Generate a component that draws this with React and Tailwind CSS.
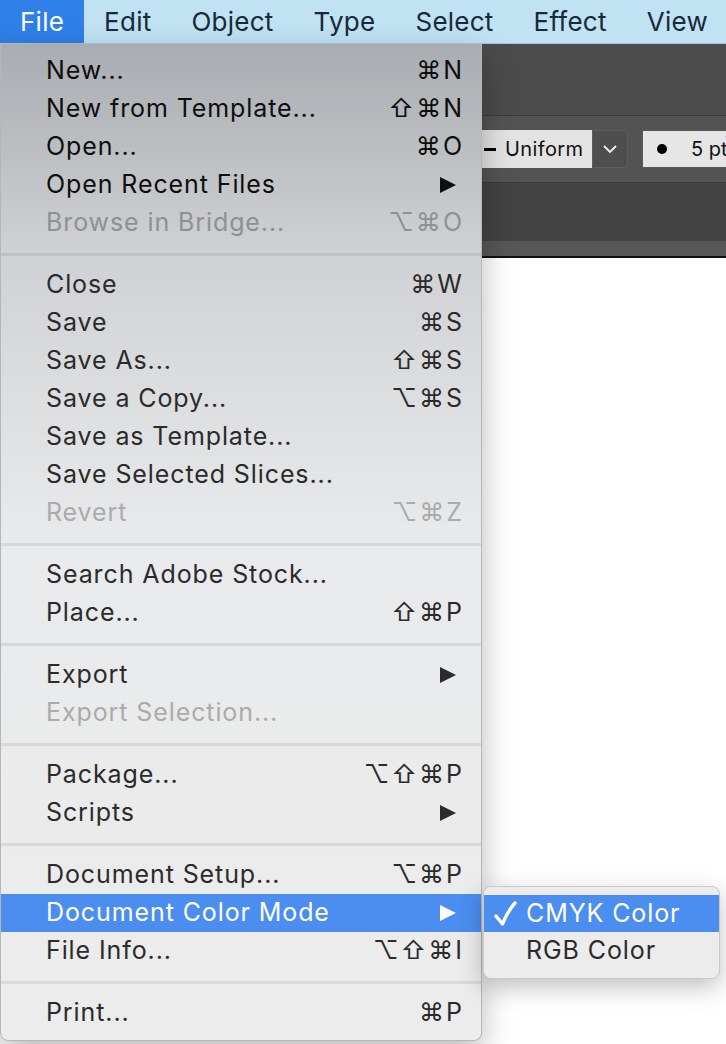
import React from 'react';

const FONT = { fontFamily: 'Inter, "DejaVu Sans", sans-serif' };

const sections = [
  [
    { label: 'New...', key: '⌘N' },
    { label: 'New from Template...', key: '⇧⌘N' },
    { label: 'Open...', key: '⌘O' },
    { label: 'Open Recent Files', sub: true },
    { label: 'Browse in Bridge...', key: '⌥⌘O', disabled: true }
  ],
  [
    { label: 'Close', key: '⌘W' },
    { label: 'Save', key: '⌘S' },
    { label: 'Save As...', key: '⇧⌘S' },
    { label: 'Save a Copy...', key: '⌥⌘S' },
    { label: 'Save as Template...' },
    { label: 'Save Selected Slices...' },
    { label: 'Revert', key: '⌥⌘Z', disabled: true }
  ],
  [
    { label: 'Search Adobe Stock...' },
    { label: 'Place...', key: '⇧⌘P' }
  ],
  [
    { label: 'Export', sub: true },
    { label: 'Export Selection...', disabled: true }
  ],
  [
    { label: 'Package...', key: '⌥⇧⌘P' },
    { label: 'Scripts', sub: true }
  ],
  [
    { label: 'Document Setup...', key: '⌥⌘P' },
    { label: 'Document Color Mode', sub: true, active: true },
    { label: 'File Info...', key: '⌥⇧⌘I' }
  ],
  [
    { label: 'Print...', key: '⌘P' }
  ]
];

function Arrow({ color }) {
  return <svg width="18" height="18" viewBox="0 0 18 18" className="mr-[7px]">
      <path d="M1 1 L17 9 L1 17 Z" fill={color} />
    </svg>;
}

function MenuRow({ item, top }) {
  let text = top ? 'text-[#0e0e0e]' : 'text-[#2b2b2b]';
  if (item.disabled) text = top ? 'text-[#8e9194]' : 'text-[#ababab]';
  if (item.active) text = 'text-white';
  const arrowColor = item.active ? '#ffffff' : top ? '#0e0e0e' : '#2b2b2b';
  return <div className={`h-[38px] flex items-center pl-[45px] pr-[17px] ${item.active ? 'bg-[#4b8ef0]' : ''} ${text}`}>
      <span className="flex-1 whitespace-nowrap tracking-[0.9px]">{item.label}</span>
      {item.key && <span className="tracking-[2px] whitespace-nowrap">{item.key}</span>}
      {item.sub && <Arrow color={arrowColor} />}
    </div>;
}

export default function App() {
  return <div className="relative w-[726px] h-[1044px] overflow-hidden bg-white" style={FONT}>
      {/* menu bar */}
      <div className="h-[44px] bg-[#c0e2f3] border-b border-[#a9c6d4] flex items-center text-[26px] tracking-[0.25px] text-[#17293a]">
        <div className="h-full px-[20px] flex items-center bg-[#2f7fe8] text-white">File</div>
        <div className="px-[20px]">Edit</div>
        <div className="px-[20px]">Object</div>
        <div className="px-[20px]">Type</div>
        <div className="px-[20px]">Select</div>
        <div className="px-[20px]">Effect</div>
        <div className="px-[20px]">View</div>
      </div>

      {/* app chrome behind the menu */}
      <div className="flex flex-col">
        <div className="h-[72px] bg-[#4b4b4b] border-b border-[#3c3c3c]" />
        <div className="h-[67px] bg-[#535353] border-b border-[#3a3a3a] flex items-start pt-[14px] pl-[470px] overflow-hidden">
          <div className="h-[38px] w-[122px] shrink-0 bg-[#e3e3e3] flex items-center text-[20px] tracking-[0.4px] text-[#111]">
            <span className="w-[12px] h-[3px] bg-black ml-[14px] mr-[9px]" />
            Uniform
          </div>
          <div className="h-[38px] w-[36px] shrink-0 bg-[#4e4e4e] border border-[#5e5e5e] rounded-r-[4px] flex items-center justify-center">
            <svg width="16" height="10" viewBox="0 0 16 10">
              <path d="M2 2 L8 8 L14 2" stroke="#f2f2f2" strokeWidth="1.8" fill="none" />
            </svg>
          </div>
          <div className="h-[38px] w-[120px] shrink-0 ml-[14px] bg-[#e6e6e6] border border-[#5a5a5a] flex items-center text-[20px] text-[#111]">
            <span className="w-[10px] h-[10px] rounded-full bg-black ml-[14px] mr-[24px]" />
            5 pt
          </div>
        </div>
        <div className="h-[58px] bg-[#434343]" />
        <div className="h-[15px] bg-[#575757]" />
        <div className="h-[2px] bg-[#111]" />
      </div>

      {/* File menu */}
      <div className="absolute left-0 top-[44px] w-[482px] pt-[8px] pb-[8px] rounded-b-[8px] border-x border-b border-[#b4b6b8] shadow-[0_12px_32px_rgba(0,0,0,0.28)] bg-[linear-gradient(to_bottom,#a9acb0_0%,#cfd1d4_21%,#e9eaeb_50%,#ececec_100%)] text-[25px]">
        {sections.map((sec, i) => <div key={i}>
            {i > 0 && <div className="h-[24px] flex items-center">
                <div className="w-full h-[3px] bg-black/[0.08]" />
              </div>}
            {sec.map(item => <MenuRow key={item.label} item={item} top={i === 0} />)}
          </div>)}
      </div>

      {/* submenu */}
      <div className="absolute left-[483px] top-[886px] w-[237px] py-[8px] rounded-[8px] bg-[#ececec] border border-[#c9c9c9] shadow-[0_8px_24px_rgba(0,0,0,0.25)] text-[25px] tracking-[0.9px]">
        <div className="h-[37px] flex items-center bg-[#4b8ef0] text-white">
          <span className="w-[42px] pl-[9px] flex items-center">
            <svg width="24" height="26" viewBox="0 0 24 26">
              <path d="M3 15 L9.5 23 Q14 11 22 2" stroke="#ffffff" strokeWidth="3.4" strokeLinecap="round" strokeLinejoin="round" fill="none" />
            </svg>
          </span>
          CMYK Color
        </div>
        <div className="h-[38px] flex items-center text-[#2b2b2b]">
          <span className="w-[42px]" />
          RGB Color
        </div>
      </div>
    </div>;
}
